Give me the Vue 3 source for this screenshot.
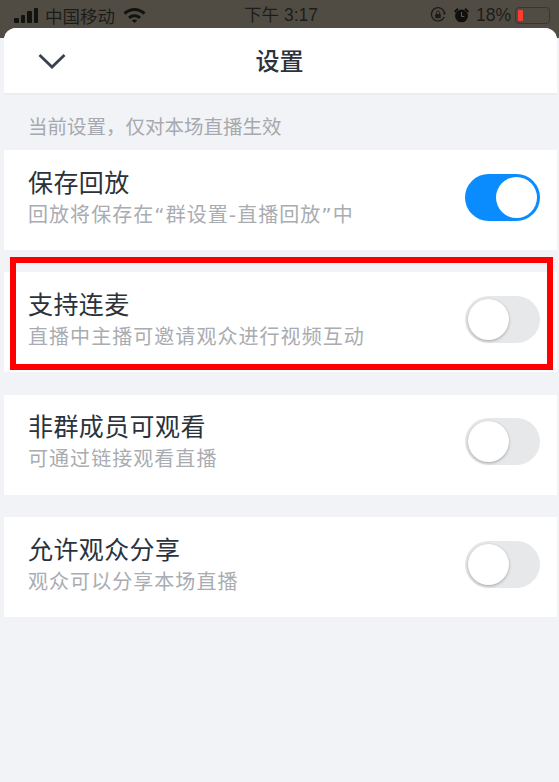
<template>
  <div class="page">
    <div class="status-bar">
      <div class="status-left">
        <span class="signal"><i></i><i></i><i></i><i></i></span>
        <span class="carrier">中国移动</span>
        <svg class="wifi" width="23" height="16" viewBox="0 0 22 16">
          <path d="M0 5.500C6.300-.6 15.700-.6 22 5.500l-2 2.200C14.600 2.700 7.400 2.700 2 7.700z" fill="#12120f" />
          <path d="M4.500 9.800c3.700-3.300 9.300-3.300 13 0l-2 2.100c-2.700-2.200-6.300-2.200-9 0z" fill="#12120f" />
          <path d="M8.300 13.200c1.600-1.100 3.800-1.100 5.400 0L11 16z" fill="#12120f" />
        </svg>
      </div>
      <span class="clock">下午 3:17</span>
      <div class="status-right">
        <svg width="16" height="16" viewBox="0 0 17 17">
          <path d="M15 10.500A7 7 0 1 1 15.500 7" fill="none" stroke="#1d1c19" stroke-width="1.400" />
          <path d="M13.500 6h3.500l-1.700 2.400z" fill="#1d1c19" />
          <rect x="5.500" y="7.500" width="6" height="4.500" rx="0.800" fill="#1d1c19" />
          <path d="M6.800 7.500V6a1.700 1.700 0 0 1 3.400 0v1.500" fill="none" stroke="#1d1c19" />
        </svg>
        <svg class="alarm" width="17" height="18" viewBox="0 0 18 18">
          <circle cx="9" cy="10" r="6.800" fill="#0f0f0d" />
          <path d="M9 6v4.500h3" fill="none" stroke="#6a6557" stroke-width="1" />
          <path d="M1 5l3.500-3.500L6 3 2.500 6.500zM17 5l-3.500-3.500L12 3l3.500 3.500z" fill="#0f0f0d" />
        </svg>
        <span class="percent">18%</span>
        <span class="battery"><i></i></span>
      </div>
    </div>

    <div class="sheet">
      <header class="sheet-header">
        <svg class="back" width="30" height="18" viewBox="0 0 30 18">
          <path d="M2.500 3 15 15 27.500 3" fill="none" stroke="#39424e" stroke-width="2.800" />
        </svg>
        <h1>设置</h1>
      </header>
      <p class="section-label">当前设置，仅对本场直播生效</p>
      <div class="rows">
        <div v-for="row in rows" :key="row.title" class="row">
          <div class="row-text">
            <div class="row-title">{{ row.title }}</div>
            <div class="row-sub">{{ row.sub }}</div>
          </div>
          <span class="toggle" :class="{ on: row.on }"><i></i></span>
          <span v-if="row.marked" class="mark"></span>
        </div>
      </div>
    </div>
  </div>
</template>

<script setup>
const rows = [
  { title: "保存回放", sub: "回放将保存在“群设置-直播回放”中", on: true },
  { title: "支持连麦", sub: "直播中主播可邀请观众进行视频互动", marked: true },
  { title: "非群成员可观看", sub: "可通过链接观看直播" },
  { title: "允许观众分享", sub: "观众可以分享本场直播" },
];
</script>

<style>
html,
body {
  margin: 0;
  background: #f2f3f6;
}
</style>

<style scoped>
.page {
  width: 559px;
  height: 782px;
  overflow: hidden;
  display: flex;
  flex-direction: column;
  background: #f2f3f6;
  font-family: "Liberation Sans", "Noto Sans CJK SC", sans-serif;
}

.status-bar {
  height: 38px;
  margin-bottom: -10px;
  padding: 2px 9px 0 14px;
  box-sizing: border-box;
  flex-shrink: 0;
  display: grid;
  grid-template-columns: 1fr auto 1fr;
  align-items: start;
  background: #504c43;
  color: #1d1c19;
}

.status-left {
  display: flex;
  align-items: center;
  height: 26px;
}

.signal {
  display: flex;
  align-items: flex-end;
  gap: 2px;
  height: 16px;
}

.signal i {
  width: 4.500px;
  background: #12120f;
  border-radius: 1px;
}

.signal i:nth-child(1) { height: 5px; }
.signal i:nth-child(2) { height: 8px; }
.signal i:nth-child(3) { height: 12px; }
.signal i:nth-child(4) { height: 15px; }

.carrier {
  margin-left: 7px;
  font-size: 17.500px;
}

.wifi {
  margin-left: 8px;
}

.clock {
  height: 26px;
  line-height: 26px;
  font-size: 17.500px;
  padding-right: 2px;
}

.status-right {
  display: flex;
  align-items: center;
  justify-content: flex-end;
  height: 26px;
}

.alarm {
  margin-left: 7px;
}

.percent {
  margin-left: 6px;
  font-size: 17.500px;
}

.battery {
  margin-left: 4px;
  width: 35px;
  height: 17px;
  box-sizing: border-box;
  padding: 2px;
  border: 1px solid #3a3730;
  border-radius: 4px;
  display: block;
}

.battery i {
  display: block;
  width: 5px;
  height: 100%;
  background: #ff3b30;
  border-radius: 1px;
}

.sheet {
  position: relative;
  margin: 0 2px 0 4px;
  flex: 1;
  border-radius: 12px 12px 0 0;
  background: #f2f3f6;
  overflow: hidden;
}

.sheet-header {
  position: relative;
  height: 65px;
  display: flex;
  align-items: center;
  justify-content: center;
  background: #fff;
  border-bottom: 2px solid #ecedef;
}

.sheet-header h1 {
  margin: 0 2px 2px 0;
  font-size: 24px;
  font-weight: 500;
  color: #2b323b;
}

.back {
  position: absolute;
  left: 33px;
  top: 24px;
}

.section-label {
  margin: 0;
  height: 55px;
  padding-left: 24px;
  line-height: 64px;
  font-size: 19.500px;
  color: #a6a9ae;
}

.rows {
  display: flex;
  flex-direction: column;
  gap: 22.400px;
}

.row {
  position: relative;
  height: 100px;
  padding: 0 17px 6px 24px;
  box-sizing: border-box;
  display: flex;
  align-items: center;
  justify-content: space-between;
  background: #fff;
}

.row-title {
  font-size: 25px;
  line-height: 34px;
  letter-spacing: 0.400px;
  color: #2b323b;
}

.row-sub {
  margin-top: 1px;
  font-family: "DejaVu Sans", "Noto Sans CJK SC", sans-serif;
  font-size: 20px;
  line-height: 28px;
  letter-spacing: 1.050px;
  color: #a9acb1;
}

.toggle {
  width: 75px;
  height: 47px;
  padding: 3px;
  box-sizing: border-box;
  display: flex;
  border-radius: 24px;
  background: #e7e8ea;
}

.toggle i {
  width: 41px;
  height: 41px;
  border-radius: 50%;
  background: #fff;
  box-shadow: 0 1px 3px rgba(0, 0, 0, 0.3);
}

.toggle.on {
  justify-content: flex-end;
  background: #0a8cff;
}

.toggle.on i {
  box-shadow: none;
}

.mark {
  position: absolute;
  left: 6px;
  right: 4px;
  top: -15px;
  bottom: 2px;
  border: 6px solid #ff0000;
  pointer-events: none;
}
</style>
